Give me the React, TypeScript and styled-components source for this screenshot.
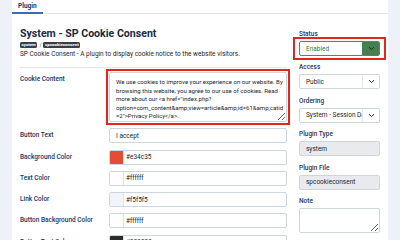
import React from 'react';
import styled, { createGlobalStyle } from 'styled-components';

const GlobalStyle = createGlobalStyle`
  html, body {
    margin: 0;
    padding: 0;
    background: #eef1f7;
    font-family: Roboto, "Liberation Sans", Arial, sans-serif;
    color: #22262a;
    overflow: hidden;
  }
`;

const Page = styled.div`
  width: 400px;
  height: 240px;
  padding: 0 12px;
  box-sizing: border-box;
`;

const Panel = styled.div`
  background: #fff;
  height: 240px;
`;

const TabBar = styled.div`
  display: flex;
  height: 14px;
  border-bottom: 1px solid #e2e6ee;
  box-sizing: border-box;
`;

const Tab = styled.div`
  display: flex;
  align-items: center;
  padding: 0 6px;
  font-size: 6.5px;
  font-weight: 700;
  color: #1c3661;
  border-bottom: 2px solid #3d6bb3;
  margin-bottom: -1px;
`;

const Body = styled.div`
  display: grid;
  grid-template-columns: 267px 81px;
  column-gap: 12px;
  padding: 0 8px;
`;

const Main = styled.div`
  display: flex;
  flex-direction: column;
  padding-top: 13px;
`;

const Title = styled.h1`
  margin: 0;
  font-size: 10.6px;
  line-height: 14px;
  font-weight: 700;
  color: #1a2a40;
`;

const Badges = styled.div`
  display: flex;
  align-items: center;
  gap: 2px;
  margin-top: 1px;
  font-size: 5px;
  color: #333;
`;

const Badge = styled.span`
  background: #3a3f45;
  color: #fff;
  font-weight: 700;
  font-size: 4.4px;
  border-radius: 1.5px;
  padding: 0 1.5px;
  height: 6px;
  line-height: 6px;
`;

const Desc = styled.p`
  margin: 2px 0 0;
  font-size: 6.5px;
  line-height: 8px;
  color: #22262a;
`;

const Divider = styled.hr`
  margin: 9px 0 0;
  border: 0;
  border-top: 1px solid #e2e6ee;
  width: 100%;
`;

const Form = styled.div`
  display: flex;
  flex-direction: column;
  gap: 6.3px;
  margin-top: 4px;
`;

const Row = styled.div`
  display: grid;
  grid-template-columns: 89px 178px;
  align-items: start;
`;

const Label = styled.label<{ $top?: number }>`
  font-size: 6.5px;
  line-height: 8px;
  font-weight: 500;
  color: #1c3661;
  padding-top: ${p => p.$top ?? 3}px;
`;

const RedFrame = styled.div<{ $mx: number; $my: number }>`
  border: 2px solid #e8231f;
  padding: ${p => p.$my - 2}px ${p => p.$mx - 2}px;
  margin: -${p => p.$my}px -${p => p.$mx}px;
`;

const TextArea = styled.textarea<{ $h: number }>`
  display: block;
  width: 100%;
  height: ${p => p.$h}px;
  box-sizing: border-box;
  margin: 0;
  padding: 5px 2px 4px 6px;
  border: 1px solid #cdd5df;
  border-radius: 2px;
  font-family: Roboto, "Liberation Sans", Arial, sans-serif;
  font-size: 6.05px;
  line-height: 8.5px;
  color: #22262a;
  background: #fff;
  overflow: hidden;
  resize: vertical;
  outline: none;
`;

const Input = styled.div<{ $readonly?: boolean }>`
  display: flex;
  align-items: center;
  height: 15px;
  box-sizing: border-box;
  border: 1px solid #cdd5df;
  border-radius: 2px;
  background: ${p => (p.$readonly ? '#e9eaed' : '#fff')};
  font-size: 6.5px;
  color: #22262a;
  padding-left: 6px;
  overflow: hidden;
  white-space: nowrap;
`;

const ColorInput = styled(Input)`
  padding-left: 0;
  gap: 2px;
`;

const Swatch = styled.span<{ $c: string }>`
  width: 14px;
  height: 100%;
  background: ${p => p.$c};
  border-right: 1px solid #dde2ea;
  box-sizing: border-box;
  flex: none;
`;

const Side = styled.div`
  display: flex;
  flex-direction: column;
  gap: 7.4px;
  padding-top: 16px;
`;

const Field = styled.div`
  display: flex;
  flex-direction: column;
  gap: 3px;
`;

const SideLabel = styled.label`
  font-size: 6.5px;
  line-height: 8px;
  font-weight: 500;
  color: #1c3661;
`;

const Select = styled.div<{ $ok?: boolean }>`
  display: flex;
  align-items: stretch;
  height: 15px;
  box-sizing: border-box;
  border: 1px solid ${p => (p.$ok ? '#4f8a5b' : '#cdd5df')};
  border-radius: 2px;
  background: #fff;
  overflow: hidden;
`;

const SelectText = styled.span<{ $ok?: boolean }>`
  flex: 1;
  display: flex;
  align-items: center;
  padding-left: 6px;
  font-size: 6.5px;
  color: ${p => (p.$ok ? '#2e7a3d' : '#22262a')};
  white-space: nowrap;
  overflow: hidden;
`;

const Caret = styled.span<{ $ok?: boolean }>`
  width: 16px;
  flex: none;
  display: flex;
  align-items: center;
  justify-content: center;
  background: ${p => (p.$ok ? '#457e50' : '#fff')};
  border-left: 1px solid ${p => (p.$ok ? '#457e50' : '#e3e8ef')};
  color: ${p => (p.$ok ? '#16301b' : '#22262a')};
`;

const Chevron = () => (
  <svg width="7" height="5" viewBox="0 0 7 5" fill="none">
    <path d="M1 1.2 3.5 3.6 6 1.2" stroke="currentColor" strokeWidth="1" />
  </svg>
);

const cookieText =
  'We use cookies to improve your experience on our website. By browsing this website, you agree to our use of cookies. Read more about our <a href="index.php?option=com_content&amp;view=article&amp;id=61&amp;catid=2">Privacy Policy</a>.';

const colors = [
  { label: 'Background Color', value: '#e34c35', swatch: '#e34c35' },
  { label: 'Text Color', value: '#ffffff', swatch: '#ffffff' },
  { label: 'Link Color', value: '#f5f5f5', swatch: '#f3f4f7' },
  { label: 'Button Background Color', value: '#ffffff', swatch: '#ffffff' },
  { label: 'Button Text Color', value: '#333333', swatch: '#2b2b2b' },
];

export default function App() {
  return (
    <>
      <GlobalStyle />
      <Page>
        <Panel>
          <TabBar>
            <Tab>Plugin</Tab>
          </TabBar>
          <Body>
            <Main>
              <Title>System - SP Cookie Consent</Title>
              <Badges>
                <Badge>system</Badge>/<Badge>spcookieconsent</Badge>
              </Badges>
              <Desc>SP Cookie Consent - A plugin to display cookie notice to the website visitors.</Desc>
              <Divider />
              <Form>
                <Row>
                  <Label $top={3}>Cookie Content</Label>
                  <RedFrame $mx={3} $my={3}>
                    <TextArea $h={50} readOnly value={cookieText} />
                  </RedFrame>
                </Row>
                <Row>
                  <Label>Button Text</Label>
                  <Input>I accept</Input>
                </Row>
                {colors.map(c => (
                  <Row key={c.label}>
                    <Label>{c.label}</Label>
                    <ColorInput>
                      <Swatch $c={c.swatch} />
                      {c.value}
                    </ColorInput>
                  </Row>
                ))}
              </Form>
            </Main>
            <Side>
              <Field>
                <SideLabel>Status</SideLabel>
                <RedFrame $mx={6} $my={4}>
                  <Select $ok>
                    <SelectText $ok>Enabled</SelectText>
                    <Caret $ok>
                      <Chevron />
                    </Caret>
                  </Select>
                </RedFrame>
              </Field>
              <Field>
                <SideLabel>Access</SideLabel>
                <Select>
                  <SelectText>Public</SelectText>
                  <Caret>
                    <Chevron />
                  </Caret>
                </Select>
              </Field>
              <Field>
                <SideLabel>Ordering</SideLabel>
                <Select>
                  <SelectText>System - Session Data</SelectText>
                  <Caret>
                    <Chevron />
                  </Caret>
                </Select>
              </Field>
              <Field>
                <SideLabel>Plugin Type</SideLabel>
                <Input $readonly>system</Input>
              </Field>
              <Field>
                <SideLabel>Plugin File</SideLabel>
                <Input $readonly>spcookieconsent</Input>
              </Field>
              <Field>
                <SideLabel>Note</SideLabel>
                <TextArea $h={25} readOnly value="" />
              </Field>
            </Side>
          </Body>
        </Panel>
      </Page>
    </>
  );
}
